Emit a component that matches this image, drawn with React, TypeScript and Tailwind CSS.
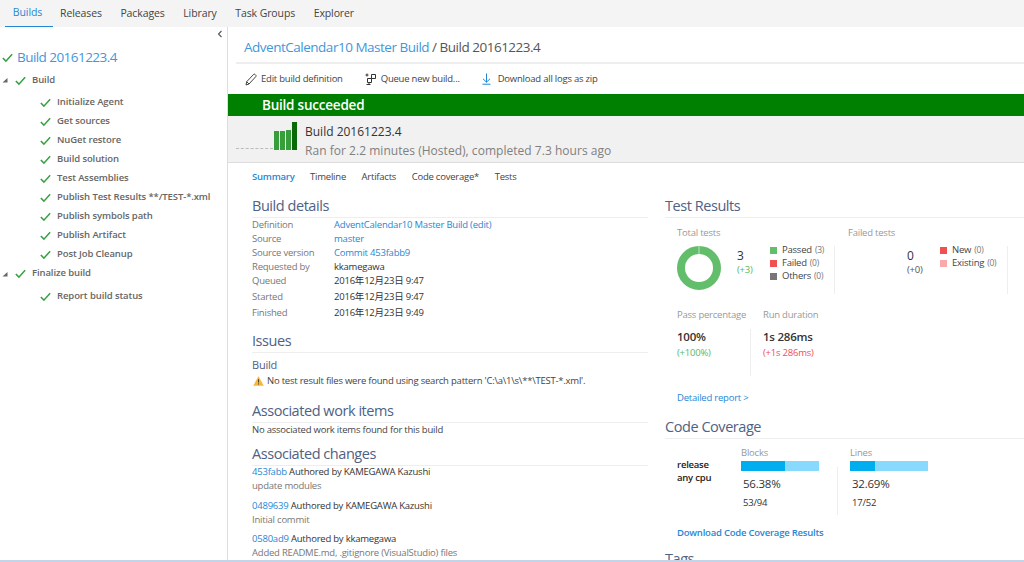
import React from "react";

const font = "font-['Open_Sans','Noto_Sans_CJK_JP',sans-serif]";

const tabs = ["Releases", "Packages", "Library", "Task Groups", "Explorer"];

const steps = [
  "Initialize Agent",
  "Get sources",
  "NuGet restore",
  "Build solution",
  "Test Assemblies",
  "Publish Test Results **/TEST-*.xml",
  "Publish symbols path",
  "Publish Artifact",
  "Post Job Cleanup",
];

function Tick({ size = 13 }: { size?: number }) {
  return (
    <svg width={size} height={size} viewBox="0 0 13 13" className="shrink-0">
      <path d="M1 7l3.6 3.8L12 2.6" fill="none" stroke="#37a041" strokeWidth="1.8" />
    </svg>
  );
}

function Caret() {
  return (
    <svg width="6" height="6" viewBox="0 0 6 6" className="shrink-0">
      <path d="M5.5 1v4.5H0.5z" fill="#666" />
    </svg>
  );
}

function Heading({ children }: { children: React.ReactNode }) {
  return (
    <div className="h-[23px] border-b border-[#eeeeee] text-[14.5px] leading-[22px] tracking-[-0.45px] text-[#4f6184]">
      {children}
    </div>
  );
}

function DetailRow({
  label,
  value,
  link,
  tall,
}: {
  label: string;
  value: string;
  link?: boolean;
  tall?: boolean;
}) {
  return (
    <div className={`flex items-center ${tall ? "h-[16px]" : "h-[14px]"}`}>
      <span className="w-[82px] text-[#777]">{label}</span>
      <span className={link ? "text-[#1f87d6]" : "text-[#333]"}>{value}</span>
    </div>
  );
}

function Swatch({ color, label, count }: { color: string; label: string; count: string }) {
  return (
    <div className="flex h-[13px] items-center">
      <span className={`mr-[5px] h-[7px] w-[7px] ${color}`} />
      <span className="text-[#444]">{label}</span>
      <span className="ml-[3px] text-[8.5px] text-[#777]">{count}</span>
    </div>
  );
}

function Change({ id, author, message }: { id: string; author: string; message: string }) {
  return (
    <div className="mb-[6.5px]">
      <div className="h-[14px] leading-[14px] text-[#333]">
        <span className="text-[#1f87d6]">{id}</span> Authored by {author}
      </div>
      <div className="h-[13px] leading-[13px] text-[#777]">{message}</div>
    </div>
  );
}

function Coverage({
  title,
  percent,
  ratio,
  fill,
}: {
  title: string;
  percent: string;
  ratio: string;
  fill: string;
}) {
  return (
    <div className="w-[78px]">
      <div className="h-[14px] leading-[14px] text-[#999]">{title}</div>
      <div className="mt-[1px] flex h-[10px] bg-[#87d9fe]">
        <div className={`h-full bg-[#00aeef] ${fill}`} />
      </div>
      <div className="mt-[5px] pl-[2px] text-[11.5px] leading-[16px] text-[#333]">{percent}</div>
      <div className="mt-[4px] pl-[2px] text-[9.5px] leading-[14px] text-[#333]">{ratio}</div>
    </div>
  );
}

function Donut() {
  return (
    <svg width="44" height="44" viewBox="0 0 44 44" className="shrink-0">
      <circle cx="22" cy="22" r="18" fill="none" stroke="#63be6b" strokeWidth="8" />
      <path d="M22 0v8" stroke="#e6f4e7" strokeWidth="0.7" />
    </svg>
  );
}

export default function App() {
  return (
    <div className={`${font} flex h-[562px] w-[1024px] flex-col overflow-hidden bg-white text-[9.5px] tracking-[-0.22px]`}>
      {/* top tabs */}
      <div className="flex h-[27px] shrink-0 items-stretch bg-[#f4f4f4] pl-[5px] text-[10.5px] tracking-[-0.1px] text-[#444]">
        <div className="flex w-[48px] items-center justify-center border-b-[1px] border-[#1f87d6] pr-[3px] text-[#1f87d6]">
          Builds
        </div>
        <div className="ml-[7px] flex items-center gap-[18.5px]">
          {tabs.map((t) => (
            <span key={t}>{t}</span>
          ))}
        </div>
      </div>

      <div className="flex min-h-0 flex-1 overflow-hidden border-b-2 border-[#c3d3e8]">
        {/* left tree */}
        <div className="w-[228px] shrink-0 border-r border-[#dddddd] pl-[2px] tracking-[-0.1px]">
          <div className="flex h-[17px] items-start justify-end pr-[4px] pt-[3px]">
            <svg width="6" height="8" viewBox="0 0 6 8">
              <path d="M4.5 1L1.5 4l3 3" fill="none" stroke="#555" strokeWidth="1.1" />
            </svg>
          </div>
          <div className="flex h-[27px] items-center gap-[4px] text-[13.5px] tracking-[-0.55px] text-[#3f97dc]">
            <Tick size={11} />
            <span>Build 20161223.4</span>
          </div>
          <div className="flex h-[18px] items-center font-semibold text-[#666]">
            <Caret />
            <span className="ml-[7px] mr-[6px] flex"><Tick size={11} /></span>
            Build
          </div>
          <div className="mt-[4px] flex flex-col pl-[38px] font-semibold text-[#666]">
            {steps.map((s) => (
              <div key={s} className="flex h-[19px] items-center gap-[6px]">
                <Tick size={11} />
                {s}
              </div>
            ))}
          </div>
          <div className="flex h-[19px] items-center font-semibold text-[#666]">
            <Caret />
            <span className="ml-[7px] mr-[6px] flex"><Tick size={11} /></span>
            Finalize build
          </div>
          <div className="mt-[4px] flex h-[19px] items-center gap-[6px] pl-[38px] font-semibold text-[#666]">
            <Tick size={11} />
            Report build status
          </div>
        </div>

        {/* main */}
        <div className="min-w-0 flex-1">
          <div className="ml-[8px] flex h-[37px] items-center border-b-[2px] border-[#eeeeee] pl-[8px] pt-[5px] text-[13.5px] tracking-[-0.49px] text-[#555]">
            <span className="text-[#3f97dc]">AdventCalendar10 Master Build</span>
            <span>&nbsp;/ Build 20161223.4</span>
          </div>
          <div className="flex h-[30px] items-center pl-[17px] text-[#444]">
            <svg width="12" height="13" viewBox="0 0 12 13" className="mr-[4px]">
              <path d="M1 12l.7-3.3L8.6 1.4a1 1 0 0 1 1.4 0l.8.8a1 1 0 0 1 0 1.4L4 11zM1.7 8.7L4 11" fill="none" stroke="#333" strokeWidth="0.9" />
            </svg>
            <span>Edit build definition</span>
            <svg width="12" height="12" viewBox="0 0 12 12" className="ml-[22px] mr-[4px]">
              <path d="M2 0.5v3M0.5 2h3M6.5 1.5h4v4h-4zM2.5 5.5h4v4h-4zM4 9.5v2M1.5 11.5h4" fill="none" stroke="#333" strokeWidth="1" />
            </svg>
            <span>Queue new build...</span>
            <svg width="11" height="12" viewBox="0 0 11 12" className="ml-[21px] mr-[6px]">
              <path d="M5.5 0.5v8.5M2 5.8l3.5 3.4 3.5-3.4M1.5 11.2h8" fill="none" stroke="#1f87d6" strokeWidth="1" />
            </svg>
            <span>Download all logs as zip</span>
          </div>
          <div className="flex h-[22px] items-center bg-[#008000] pl-[34px] text-[13.5px] font-semibold text-white">
            Build succeeded
          </div>
          <div className="flex h-[47px] items-stretch border-b border-[#dddddd] bg-[#f1f1f1] pl-[8px]">
            <div className="mb-[12px] mt-[6px] flex items-end">
              <div className="mb-[1px] mr-[1px] w-[37px] border-b border-dashed border-[#bbbbbb]" />
              <div className="flex items-end gap-[1px]">
                <div className="h-[19px] w-[5px] bg-[#389e3c]" />
                <div className="h-[19px] w-[5px] bg-[#389e3c]" />
                <div className="h-[20px] w-[5px] bg-[#389e3c]" />
                <div className="h-[28px] w-[5px] bg-[#0a6a0a]" />
              </div>
            </div>
            <div className="ml-[8px] flex flex-col pt-[6px] tracking-[0px]">
              <div className="h-[19px] text-[12px] leading-[19px] text-[#333]">Build 20161223.4</div>
              <div className="h-[19px] text-[12px] leading-[19px] tracking-[0.03px] text-[#808080]">
                Ran for 2.2 minutes (Hosted), completed 7.3 hours ago
              </div>
            </div>
          </div>
          <div className="flex h-[29px] items-center gap-[15.5px] pl-[24px] text-[#444]">
            <span className="font-semibold text-[#1f87d6]">Summary</span>
            <span>Timeline</span>
            <span>Artifacts</span>
            <span>Code coverage*</span>
            <span>Tests</span>
          </div>

          <div className="flex">
            {/* left column */}
            <div className="ml-[24px] w-[396px] shrink-0 pt-[3px]">
              <Heading>Build details</Heading>
              <div className="pt-[0.5px]">
                <DetailRow label="Definition" value="AdventCalendar10 Master Build (edit)" link />
                <DetailRow label="Source" value="master" link />
                <DetailRow label="Source version" value="Commit 453fabb9" link />
                <DetailRow label="Requested by" value="kkamegawa" />
                <DetailRow label="Queued" value="2016年12月23日 9:47" />
                <div className="h-[1px]" />
                <DetailRow label="Started" value="2016年12月23日 9:47" tall />
                <DetailRow label="Finished" value="2016年12月23日 9:49" tall />
              </div>
              <div className="mt-[8.5px]">
                <Heading>Issues</Heading>
              </div>
              <div className="mt-[4px] h-[16px] text-[11px] leading-[16px] text-[#4f6184]">Build</div>
              <div className="flex h-[16px] items-center text-[#444]">
                <svg width="11" height="10" viewBox="0 0 11 10" className="ml-[1px] mr-[3px]">
                  <path d="M5.5 0.3L10.8 9.7H0.2z" fill="#f6b73c" />
                  <path d="M5.5 3.3v3.2M5.5 7.4v1.1" stroke="#333" strokeWidth="0.9" />
                </svg>
                No test result files were found using search pattern 'C:\a\1\s\**\TEST-*.xml'.
              </div>
              <div className="mt-[11px]">
                <Heading>Associated work items</Heading>
              </div>
              <div className="h-[14px] leading-[14px] text-[#444]">No associated work items found for this build</div>
              <div className="mt-[6px]">
                <Heading>Associated changes</Heading>
              </div>
              <div className="-mt-[1px]">
                <Change id="453fabb" author="KAMEGAWA Kazushi" message="update modules" />
                <Change id="0489639" author="KAMEGAWA Kazushi" message="Initial commit" />
                <Change id="0580ad9" author="kkamegawa" message="Added README.md, .gitignore (VisualStudio) files" />
              </div>
            </div>

            {/* right column */}
            <div className="ml-[17px] min-w-0 flex-1 pt-[3px]">
              <Heading>Test Results</Heading>
              <div className="flex pl-[12px] pt-[8px]">
                <div className="w-[158px] shrink-0">
                  <div className="h-[14px] leading-[14px] text-[#999]">Total tests</div>
                  <div className="mt-[6px] flex h-[48px] border-r border-[#eeeeee]">
                    <Donut />
                    <div className="ml-[16px] w-[33px] pt-[2px]">
                      <div className="h-[15px] text-[12px] leading-[15px] text-[#333]">3</div>
                      <div className="h-[14px] leading-[14px] text-[#5cb85c]">(+3)</div>
                    </div>
                    <div className="-mt-[2px]">
                      <Swatch color="bg-[#63be6b]" label="Passed" count="(3)" />
                      <Swatch color="bg-[#f05050]" label="Failed" count="(0)" />
                      <Swatch color="bg-[#777777]" label="Others" count="(0)" />
                    </div>
                  </div>
                </div>
                <div className="ml-[13px] w-[160px] shrink-0">
                  <div className="h-[14px] leading-[14px] text-[#999]">Failed tests</div>
                  <div className="mt-[6px] flex h-[48px] border-r border-[#eeeeee] pl-[59px]">
                    <div className="w-[33px] pt-[2px]">
                      <div className="h-[15px] text-[12px] leading-[15px] text-[#333]">0</div>
                      <div className="h-[14px] leading-[14px] text-[#555]">(+0)</div>
                    </div>
                    <div className="-mt-[2px]">
                      <Swatch color="bg-[#f05050]" label="New" count="(0)" />
                      <Swatch color="bg-[#f8a9a9]" label="Existing" count="(0)" />
                    </div>
                  </div>
                </div>
              </div>
              <div className="flex pl-[12px] pt-[14px]">
                <div className="w-[74px] shrink-0">
                  <div className="h-[14px] leading-[14px] text-[#999]">Pass percentage</div>
                  <div className="mt-[7px] h-[47px] border-r border-[#eeeeee]">
                    <div className="h-[17px] text-[11.5px] font-semibold leading-[16px] text-[#333]">100%</div>
                    <div className="h-[14px] leading-[14px] text-[#5cb85c]">(+100%)</div>
                  </div>
                </div>
                <div className="ml-[12px]">
                  <div className="h-[14px] leading-[14px] text-[#999]">Run duration</div>
                  <div className="mt-[7px]">
                    <div className="h-[17px] text-[11.5px] font-semibold leading-[16px] text-[#333]">1s 286ms</div>
                    <div className="h-[14px] leading-[14px] text-[#f05050]">(+1s 286ms)</div>
                  </div>
                </div>
              </div>
              <div className="ml-[12px] mt-[15px] h-[14px] leading-[14px] text-[#1f87d6]">Detailed report &gt;</div>
              <div className="mt-[11px]">
                <Heading>Code Coverage</Heading>
              </div>
              <div className="flex pl-[12px] pt-[7px]">
                <div className="w-[64px] shrink-0 pt-[12px] font-semibold leading-[13px] text-[#222]">
                  <div>release</div>
                  <div>any cpu</div>
                </div>
                <Coverage title="Blocks" percent="56.38%" ratio="53/94" fill="w-[44px]" />
                <div className="ml-[18px] mr-[12px] mt-[21px] h-[48px] border-r border-[#eeeeee]" />
                <Coverage title="Lines" percent="32.69%" ratio="17/52" fill="w-[25px]" />
              </div>
              <div className="ml-[12px] mt-[11px] h-[14px] font-semibold leading-[14px] text-[#1f87d6]">Download Code Coverage Results</div>
              <div className="mt-[8px] text-[14.5px] leading-[22px] tracking-[-0.45px] text-[#4f6184]">Tags</div>
            </div>
          </div>
        </div>
      </div>
    </div>
  );
}
